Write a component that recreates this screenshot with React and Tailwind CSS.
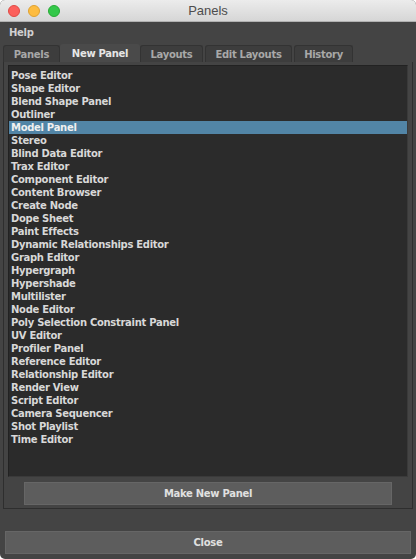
const items = [
  'Pose Editor', 'Shape Editor', 'Blend Shape Panel', 'Outliner', 'Model Panel', 'Stereo',
  'Blind Data Editor', 'Trax Editor', 'Component Editor', 'Content Browser', 'Create Node',
  'Dope Sheet', 'Paint Effects', 'Dynamic Relationships Editor', 'Graph Editor', 'Hypergraph',
  'Hypershade', 'Multilister', 'Node Editor', 'Poly Selection Constraint Panel', 'UV Editor',
  'Profiler Panel', 'Reference Editor', 'Relationship Editor', 'Render View', 'Script Editor',
  'Camera Sequencer', 'Shot Playlist', 'Time Editor',
];

const tabs = [
  { label: 'Panels', w: 'w-[57px]' },
  { label: 'New Panel', w: 'w-[80px]', active: true },
  { label: 'Layouts', w: 'w-[63px]' },
  { label: 'Edit Layouts', w: 'w-[87px]' },
  { label: 'History', w: 'w-[59px]' },
];

export default function App() {
  return (
    <div className="w-[416px] h-[559px] bg-[#444444] flex flex-col overflow-hidden rounded-[5px] font-['DejaVu_Sans',sans-serif] tracking-[-0.3px]">
      <div className="h-[22px] shrink-0 relative flex items-center justify-center bg-gradient-to-b from-[#ececec] to-[#d6d6d6] border-b border-[#b1b1b1]">
        <div className="absolute left-[8px] top-[5px] flex gap-[8px]">
          <span className="w-[12px] h-[12px] rounded-full bg-[#fc605c] border border-[#de4a45]" />
          <span className="w-[12px] h-[12px] rounded-full bg-[#fdbc40] border border-[#dea131]" />
          <span className="w-[12px] h-[12px] rounded-full bg-[#34c84a] border border-[#27aa35]" />
        </div>
        <span className="text-[13px] tracking-normal text-[#4d4d4d] font-['Liberation_Sans',sans-serif]">Panels</span>
      </div>
      <div className="h-[20px] shrink-0 flex items-center px-[9px]">
        <span className="text-[10px] font-bold text-[#d0d0d0]">Help</span>
      </div>
      <div className="h-[20px] shrink-0 flex items-end px-[3px] gap-[2px]">
        {tabs.map(t => (
          <div
            key={t.label}
            className={`${t.w} flex items-center justify-center rounded-t-[3px] text-[10px] font-bold ${t.active ? 'h-[18px] bg-[#4a4a4a] text-[#e6e6e6] -mx-[2px]' : 'h-[17px] bg-[#3d3d3d] text-[#a8a8a8] border border-b-0 border-[#333333]'}`}
          >
            {t.label}
          </div>
        ))}
      </div>
      <div className="mx-[3px] h-[447px] shrink-0 border border-[#2e2e2e] border-t-0 bg-[#444444] flex flex-col px-[4px] pt-[3px]">
        <div className="h-[412px] bg-[#2b2b2b] border border-[#222222] border-r-[#3a3a3a] border-b-[#3a3a3a] pt-[3px]">
          {items.map(it => (
            <div
              key={it}
              className={`h-[13px] leading-[13px] pl-[2px] text-[10px] font-bold ${it === 'Model Panel' ? 'bg-[#5285a6] text-[#f0f0f0]' : 'text-[#d8d8d8]'}`}
            >
              {it}
            </div>
          ))}
        </div>
        <div className="mt-[5px] mx-[16px] h-[23px] bg-[#5d5d5d] border border-[#666666] flex items-center justify-center text-[10px] font-bold text-[#e0e0e0]">
          Make New Panel
        </div>
      </div>
      <div className="mt-[22px] mx-[5px] h-[23px] bg-[#5d5d5d] border border-[#666666] flex items-center justify-center text-[10px] font-bold text-[#e0e0e0]">
        Close
      </div>
    </div>
  );
}
